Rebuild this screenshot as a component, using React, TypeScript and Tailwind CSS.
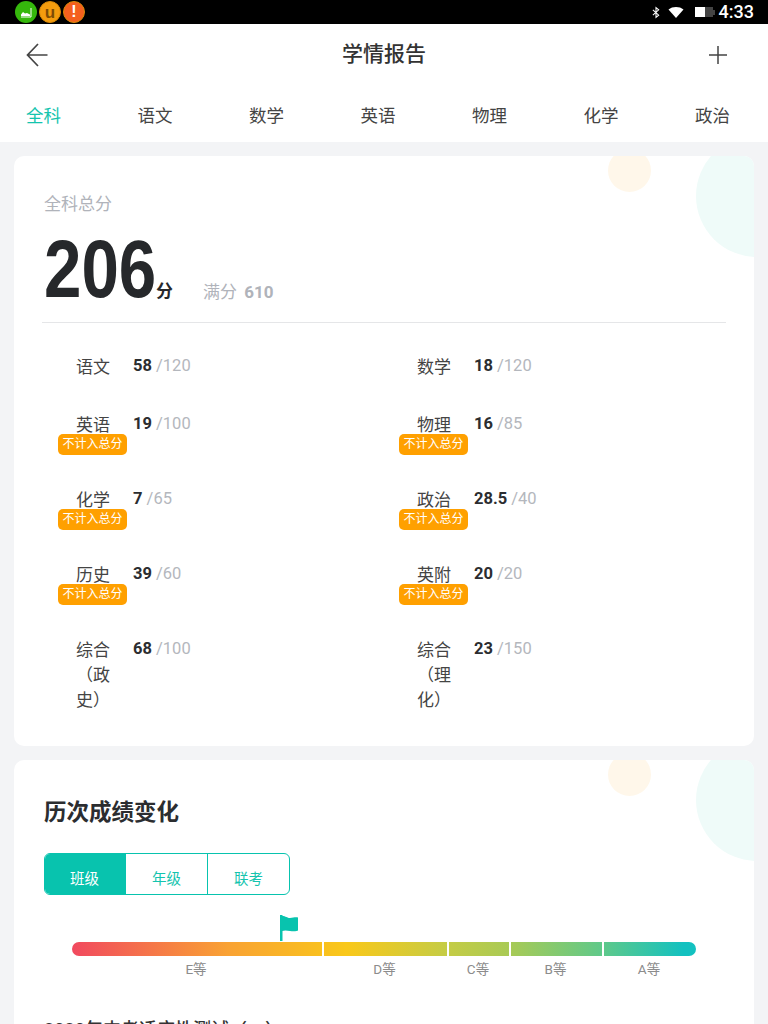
import React from 'react';

const tabs = ['全科', '语文', '数学', '英语', '物理', '化学', '政治'];

const scores = [
  { name: '语文', score: '58', full: '120', excluded: false },
  { name: '数学', score: '18', full: '120', excluded: false },
  { name: '英语', score: '19', full: '100', excluded: true },
  { name: '物理', score: '16', full: '85', excluded: true },
  { name: '化学', score: '7', full: '65', excluded: true },
  { name: '政治', score: '28.5', full: '40', excluded: true },
  { name: '历史', score: '39', full: '60', excluded: true },
  { name: '英附', score: '20', full: '20', excluded: true },
  { name: '综合（政史）', score: '68', full: '100', excluded: false },
  { name: '综合（理化）', score: '23', full: '150', excluded: false },
];

const grades = [
  { label: 'E等', width: 'w-[252px]' },
  { label: 'D等', width: 'w-[125px]' },
  { label: 'C等', width: 'w-[62px]' },
  { label: 'B等', width: 'w-[93px]' },
  { label: 'A等', width: 'flex-1' },
];

const Blobs = () => (
  <>
    <div className="absolute left-[594px] top-[-7px] w-[43px] h-[43px] rounded-full bg-[#fff7ea]" />
    <div className="absolute left-[682px] top-[-21px] w-[122px] h-[122px] rounded-full bg-[#effbf9]" />
  </>
);

const StatusBar = () => (
  <div className="h-6 bg-black flex items-center justify-between pl-[15px] pr-[14px]">
    <div className="flex gap-[2px]">
      <div className="w-[22px] h-[22px] rounded-full bg-[#35b80c] flex items-center justify-center">
        <svg width="12" height="11" viewBox="0 0 12 11">
          <path d="M1 7.5 3 5l2 1.5L7 6l3 1.5V9H1z" fill="#fff" />
          <path d="M1 10h10V1" stroke="#fff" strokeWidth="1" fill="none" />
        </svg>
      </div>
      <div className="w-[22px] h-[22px] rounded-full bg-[#f39c0e] border border-[#d98a08] flex items-center justify-center">
        <span className="text-[#7d4d05] text-[17px] font-bold leading-none font-['Liberation_Sans',sans-serif]">u</span>
      </div>
      <div className="w-[22px] h-[22px] rounded-full bg-[#f4601e] border border-[#d98a08] flex items-center justify-center">
        <span className="text-white text-[16px] font-bold leading-none font-['Liberation_Sans',sans-serif]">!</span>
      </div>
    </div>
    <div className="flex items-center">
      <svg width="8" height="13" viewBox="0 0 9 13" className="mr-[8px]">
        <path d="M1 3.5 7.5 9.5 4.5 12V1l3 2.5L1 9.5" stroke="#fff" strokeWidth="1.2" fill="none" />
      </svg>
      <svg width="16" height="11" viewBox="0 0 15 11" className="mr-[11px]">
        <path d="M0 2.5C4 -.8 11 -.8 15 2.5L7.5 11z" fill="#fff" />
      </svg>
      <div className="flex items-center mr-[4px]">
        <div className="w-[10px] h-[10px] bg-white" />
        <div className="w-[8px] h-[10px] bg-[#444]" />
        <div className="w-[2px] h-[5px] bg-[#444]" />
      </div>
      <span className="text-white text-[18px] leading-6 font-medium">4:33</span>
    </div>
  </div>
);

const ScoreCell = ({ item }: { item: (typeof scores)[number] }) => (
  <div className="flex pl-[34px]">
    <div className="w-[34px] text-[17px] leading-[25px] text-[#444] break-all">
      {item.name}
      {item.excluded && (
        <div className="relative -ml-[18px] -mt-[4px] w-[69px] h-[21px] rounded-[5px] bg-[#ffa000] text-white text-[12px] leading-[21px] text-center">
          不计入总分
        </div>
      )}
    </div>
    <div className="ml-[23px] text-[16.5px] leading-[21px] whitespace-nowrap">
      <span className="font-bold text-[#2b2d30]">{item.score}</span>
      <span className="text-[#b4b7bd]"> /{item.full}</span>
    </div>
  </div>
);

export default function App() {
  return (
    <div className="w-[768px] h-[1024px] overflow-hidden bg-[#f3f4f6] font-['Roboto','Noto_Sans_CJK_SC',sans-serif]">
      <StatusBar />

      <div className="bg-white h-[118px]">
        <div className="h-[62px] px-[26px] flex items-center">
          <div className="flex-1">
            <svg width="22" height="24" viewBox="0 0 22 24" fill="none" stroke="#444" strokeWidth="1.7">
              <path d="M21.5 12H1.5M12 1 1.5 12 12 23" />
            </svg>
          </div>
          <h1 className="text-[21px] font-medium text-[#333]">学情报告</h1>
          <div className="flex-1 flex justify-end">
            <svg width="18" height="18" viewBox="0 0 18 18" stroke="#444" strokeWidth="1.5" className="mr-[15px]">
              <path d="M0 9h18M9 0v18" />
            </svg>
          </div>
        </div>
        <div className="flex justify-between pl-[26px] pr-[38px] pt-[17px]">
          {tabs.map((tab, idx) => (
            <span
              key={tab}
              className={`text-[17.5px] leading-[26px] ${idx === 0 ? 'text-[#14c4ae]' : 'text-[#444]'}`}
            >
              {tab}
            </span>
          ))}
        </div>
      </div>

      <div className="px-[14px] pt-[14px] flex flex-col gap-[14px]">
        <section className="relative overflow-hidden bg-white rounded-[10px] h-[590px]">
          <Blobs />
          <div className="relative px-[28px]">
            <div className="pl-[2px] pt-[36px] text-[17px] leading-[24px] text-[#b0b3ba]">全科总分</div>
            <div className="pl-[2px] mt-[9px] h-[98px] border-b border-[#e5e6e8] flex items-start">
              <span className="w-[111px] origin-left scale-x-[0.82] font-['Liberation_Sans',sans-serif] font-bold text-[82px] leading-[87px] text-[#26282b]">
                206
              </span>
              <span className="ml-[1px] mt-[54px] text-[17px] leading-[24px] font-bold text-[#26282b]">分</span>
              <span className="ml-[30px] mt-[55px] text-[17px] leading-[24px] text-[#b0b3ba]">
                满分 <span className="font-bold ml-[3px]">610</span>
              </span>
            </div>
            <div className="grid grid-cols-[341px_1fr] gap-y-[33px] pt-[32px]">
              {scores.map((item) => (
                <ScoreCell key={item.name} item={item} />
              ))}
            </div>
          </div>
        </section>

        <section className="relative overflow-hidden bg-white rounded-[10px] h-[400px]">
          <Blobs />
          <div className="relative px-[30px]">
            <h2 className="pt-[37px] text-[22.5px] leading-[30px] font-bold text-[#2b2d30]">历次成绩变化</h2>
            <div className="mt-[26px] flex w-[246px] h-[42px] rounded-[6px] border border-[#08c3ae] overflow-hidden text-[14.5px] leading-[51px] text-center">
              <div className="w-[81px] pr-[2px] bg-[#08c3ae] text-white">班级</div>
              <div className="w-[82px] border-r border-[#08c3ae] text-[#14c4ae]">年级</div>
              <div className="flex-1 text-[#14c4ae]">联考</div>
            </div>

            <div className="relative mt-[47px] mx-[28px]">
              <svg width="19" height="26" viewBox="0 0 19 26" className="absolute left-[208px] top-[-27px]">
                <path d="M0 0h2.5v26H0z" fill="#08c3ae" />
                <path d="M2 1c4 0 5 2 8 2 3 0 5-1 8-.5v13c-.5 .8-5 1-8 .5-3-.5-5-1-8 0z" fill="#08c3ae" />
              </svg>
              <div className="flex h-[14px] rounded-full overflow-hidden bg-[linear-gradient(90deg,#f1495f_0%,#f9a233_25%,#f9c81a_44%,#c5cc45_60%,#a9ca55_70%,#5fc98a_85%,#13c1c0_98%)]">
                {grades.map((grade, idx) => (
                  <div
                    key={grade.label}
                    className={`${grade.width} ${idx < grades.length - 1 ? 'border-r-2 border-white' : ''}`}
                  />
                ))}
              </div>
              <div className="flex pt-[4px] -ml-[2px]">
                {grades.map((grade) => (
                  <div key={grade.label} className={`${grade.width} text-center text-[13.5px] leading-[18px] text-[#8c8c8c]`}>
                    {grade.label}
                  </div>
                ))}
              </div>
            </div>

            <div className="mt-[39px] text-[18px] leading-[26px] font-medium text-[#333]">2020年中考适应性测试（一）</div>
          </div>
        </section>
      </div>
    </div>
  );
}
